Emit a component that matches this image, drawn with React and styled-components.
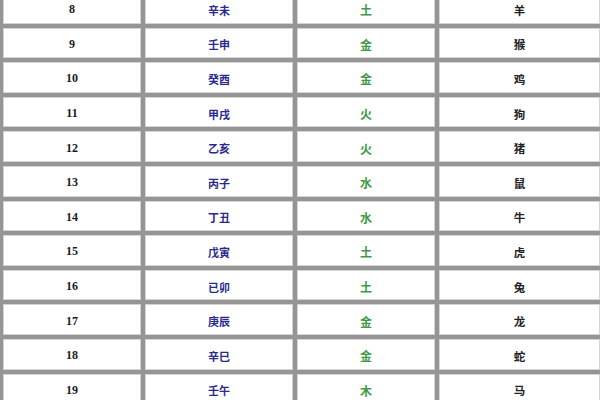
import React from "react";
import styled, { createGlobalStyle } from "styled-components";

const Global = createGlobalStyle`
  html, body { margin: 0; padding: 0; background: #ffffff; overflow: hidden; }
  body { width: 600px; height: 400px; }
`;

const Frame = styled.div`
  width: 600px;
  height: 400px;
  overflow: hidden;
  background: #ffffff;
`;

const Table = styled.div`
  margin-top: -7px;
  display: grid;
  grid-template-columns: 138px 148px 138px 161px;
  grid-auto-rows: 30.6px;
  gap: 4px;
  padding: 0 0 4px 3px;
  background: #959595;
  width: 600px;
  box-sizing: border-box;
`;

const Cell = styled.div`
  background: #ffffff;
  box-shadow: inset 0 0 0 1px #d4d4d4;
  display: flex;
  align-items: center;
  justify-content: center;
  padding-top: 3px;
  box-sizing: border-box;
  font-weight: 700;
  font-size: ${(p) => p.$size || "11px"};
  color: ${(p) => p.$color || "#1a1a1a"};
  font-family: ${(p) =>
    p.$serif
      ? `"Liberation Serif", "Noto Sans CJK SC", serif`
      : `"Noto Sans CJK SC", "Noto Sans CJK TC", sans-serif`};
`;

const rows = [
  [8, "辛未", "土", "羊"],
  [9, "壬申", "金", "猴"],
  [10, "癸酉", "金", "鸡"],
  [11, "甲戌", "火", "狗"],
  [12, "乙亥", "火", "猪"],
  [13, "丙子", "水", "鼠"],
  [14, "丁丑", "水", "牛"],
  [15, "戊寅", "土", "虎"],
  [16, "已卯", "土", "兔"],
  [17, "庚辰", "金", "龙"],
  [18, "辛巳", "金", "蛇"],
  [19, "壬午", "木", "马"],
];

export default function App() {
  return (
    <Frame>
      <Global />
      <Table>
        {rows.map(([n, gz, wx, sx]) => (
          <React.Fragment key={n}>
            <Cell $serif $size="12px" $color="#1a1a1a">{n}</Cell>
            <Cell $size="11px" $color="#2a2a8c">{gz}</Cell>
            <Cell $size="12px" $color="#3f9a46">{wx}</Cell>
            <Cell $size="11.5px" $color="#222222">{sx}</Cell>
          </React.Fragment>
        ))}
      </Table>
    </Frame>
  );
}
